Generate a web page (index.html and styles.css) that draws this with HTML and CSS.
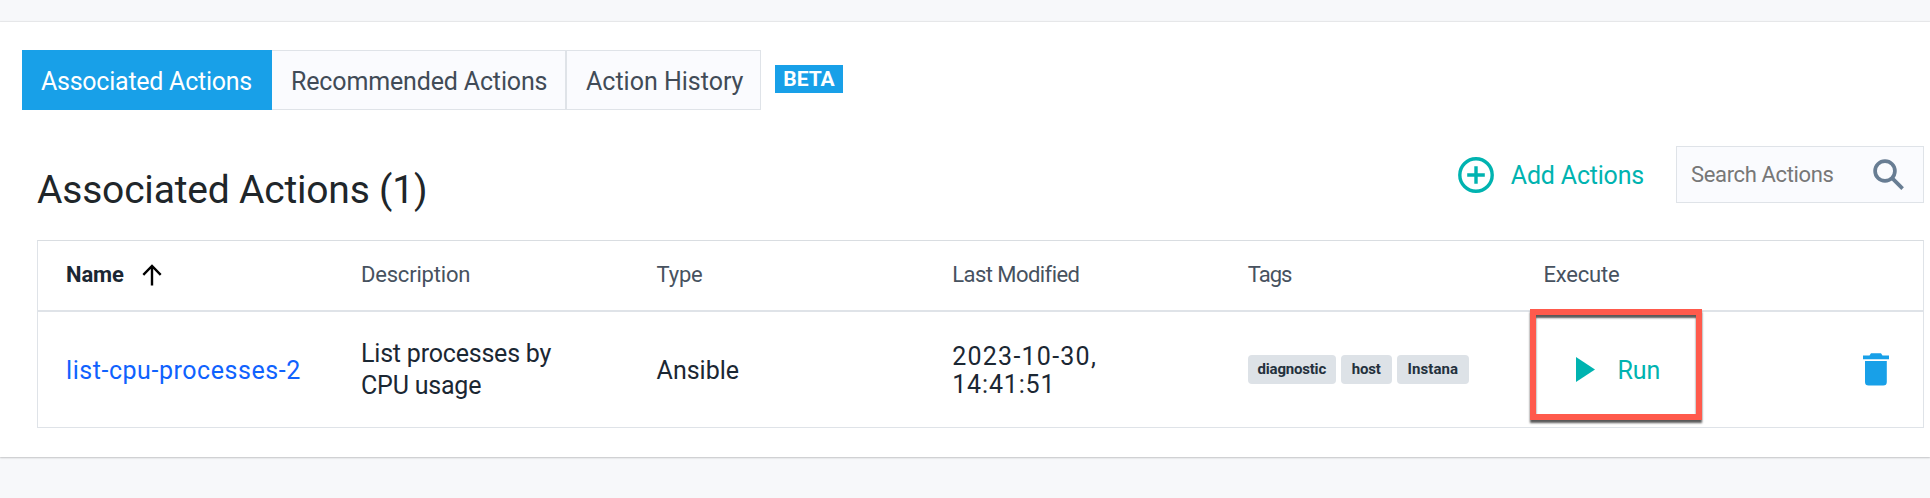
FILE: index.html
```
<!DOCTYPE html>
<html lang="en">
<head>
<meta charset="utf-8">
<title>Associated Actions</title>
<link rel="stylesheet" href="styles.css">
</head>
<body>
<main class="card">
  <nav class="tabs">
    <a class="tab tab-active">Associated Actions</a>
    <a class="tab tab-recommended">Recommended Actions</a>
    <a class="tab tab-history">Action History</a>
    <span class="beta">BETA</span>
  </nav>
  <section class="panel">
    <header class="toolbar">
      <h1 class="title">Associated Actions (1)</h1>
      <button class="add">
        <svg class="add-icon" viewBox="0 0 36 36"><circle cx="18" cy="18" r="16.2"/><path d="M18 9.2v17.6M9.2 18h17.6"/></svg>
        <span class="add-label">Add Actions</span>
      </button>
      <div class="search">
        <span class="placeholder">Search Actions</span>
        <svg class="search-icon" viewBox="0 0 32 32"><circle cx="12" cy="12" r="9.9"/><path d="M19.4 19.4L29.6 29.6"/></svg>
      </div>
    </header>
    <div class="table">
      <div class="row head">
        <div class="cell sorted"><span>Name</span><svg class="arrow" viewBox="0 0 20 22"><path d="M10 21.5V2M1.3 10.8L10 2l8.7 8.8"/></svg></div>
        <div class="cell">Description</div>
        <div class="cell">Type</div>
        <div class="cell modified-head">Last Modified</div>
        <div class="cell tags-head">Tags</div>
        <div class="cell">Execute</div>
        <div class="cell"></div>
      </div>
      <div class="row body">
        <div class="cell name"><a class="link">list-cpu-processes-2</a></div>
        <div class="cell description">List processes by<br>CPU usage</div>
        <div class="cell type">Ansible</div>
        <div class="cell date"><span class="day">2023-10-30,</span><span class="time">14:41:51</span></div>
        <div class="cell tags"><span class="tag tag-diagnostic">diagnostic</span><span class="tag tag-host">host</span><span class="tag tag-instana">Instana</span></div>
        <div class="cell execute">
          <svg class="play" viewBox="0 0 19 25"><path d="M0 0L19 12.5L0 25Z"/></svg>
          <span class="run">Run</span>
          <div class="highlight"></div>
        </div>
        <div class="cell delete"><svg class="trash" viewBox="0 0 26 33"><path d="M0 2.4H6.5L8 .3H18L19.500 2.400H26V6.300H0ZM2 8H23.800V29Q23.800 32.600 20.200 32.600H5.600Q2 32.600 2 29Z"/></svg></div>
      </div>
    </div>
  </section>
</main>
</body>
</html>
```
FILE: styles.css
```
* { box-sizing: border-box; }

body {
  margin: 0;
  padding-top: 22px;
  height: 498px;
  overflow: hidden;
  background: #f7f8fa;
  font: 25px/32px Roboto, "Liberation Sans", sans-serif;
  letter-spacing: -0.2px;
  color: #1b2733;
}

.card {
  height: 435px;
  padding: 28px 6px 0 22px;
  background: #fff;
  box-shadow: 0 0 1px 1px rgba(0, 0, 0, .06), 0 1px 2px rgba(0, 0, 0, .15);
}

.tabs { display: flex; height: 60px; }
.tab {
  display: flex;
  align-items: center;
  padding: 3px 0 0 19px;
  border: 1px solid #dfe3e8;
  border-left: 0;
  background: #fafbfe;
  color: #414b57;
}
.tab-active {
  width: 250px;
  border-color: #18a0e8;
  background: #18a0e8;
  color: #fff;
  letter-spacing: -0.25px;
}
.tab-recommended { width: 295px; letter-spacing: -0.15px; border-right-width: 2px; }
.tab-history { width: 194px; letter-spacing: 0; }
.beta {
  width: 68px;
  height: 28px;
  margin: 15px 0 0 14px;
  background: #18a0e8;
  color: #fff;
  font-size: 21px;
  font-weight: 700;
  line-height: 28px;
  letter-spacing: 0;
  text-align: center;
}

.panel { padding-left: 15px; }
.toolbar { display: flex; height: 130px; }
.title {
  margin: 56px auto 0 0;
  font-size: 39px;
  font-weight: 400;
  line-height: 48px;
  letter-spacing: -0.2px;
  color: #20262a;
}
.add {
  display: flex;
  align-items: center;
  gap: 17px;
  height: 40px;
  margin: 45px 32px 0 0;
  padding: 0;
  border: 0;
  background: none;
  color: #00b3b0;
  font: inherit;
  letter-spacing: -0.2px;
}
.add-icon {
  width: 36px;
  height: 36px;
  fill: none;
  stroke: #00b3b0;
  stroke-width: 3.4;
}
.add-label { padding-top: 2px; }
.search {
  display: flex;
  align-items: center;
  justify-content: space-between;
  width: 248px;
  height: 57px;
  margin-top: 36px;
  padding: 0 18px 0 14px;
  border: 1px solid #dfe3e8;
  background: #fafbfe;
}
.placeholder { font-size: 22px; letter-spacing: -0.35px; color: #777; }
.search-icon {
  width: 32px;
  height: 32px;
  fill: none;
  stroke: #687d93;
  stroke-width: 3.7;
}

.table { border: 1px solid #d9dde1; border-color: #d9dde1 #dfe3e8 #dfe3e8; }
.row { display: grid; grid-template-columns: 295px repeat(5, 295.6px) 1fr; }
.cell { display: flex; align-items: center; padding-left: 28px; }

.head {
  height: 71px;
  padding-bottom: 2px;
  border-bottom: 2px solid #dfe3e8;
  font-size: 22px;
  color: #47525f;
}
.sorted { gap: 18px; font-weight: 700; letter-spacing: -0.1px; color: #1b2733; }
.arrow {
  width: 20px;
  height: 22px;
  fill: none;
  stroke: #000;
  stroke-width: 2.4;
}
.modified-head { letter-spacing: -0.55px; }
.tags-head { letter-spacing: -1px; }

.body { height: 115px; }
.name, .type, .date { padding-top: 2px; }
.link { color: #0f62fe; letter-spacing: .55px; }
.type { letter-spacing: 0; }
.date { flex-direction: column; align-items: flex-start; justify-content: center; line-height: 28px; }
.day { letter-spacing: 1.25px; }
.time { letter-spacing: .85px; }

.tags { gap: 5px; }
.tag {
  height: 29px;
  border-radius: 4px;
  background: #dde2e7;
  color: #24313d;
  font-size: 15px;
  font-weight: 700;
  line-height: 28px;
  text-align: center;
}
.tag-diagnostic { width: 88px; }
.tag-host { width: 51px; }
.tag-instana { width: 72px; letter-spacing: .1px; }

.execute { position: relative; padding-left: 61px; color: #00b3b0; }
.play { width: 19px; height: 25px; fill: currentColor; }
.run { margin-left: 22px; padding-top: 2px; letter-spacing: 0; }
.highlight {
  position: absolute;
  top: -3px;
  left: 15px;
  width: 172px;
  height: 111px;
  border: 6px solid #ff5a4c;
  box-shadow: 0 3px 2px rgba(0, 0, 0, .65), inset 0 3px 2px rgba(0, 0, 0, .65);
}

.delete { justify-content: flex-end; padding-right: 34px; }
.trash { width: 26px; height: 33px; fill: #18a0e8; }
```
